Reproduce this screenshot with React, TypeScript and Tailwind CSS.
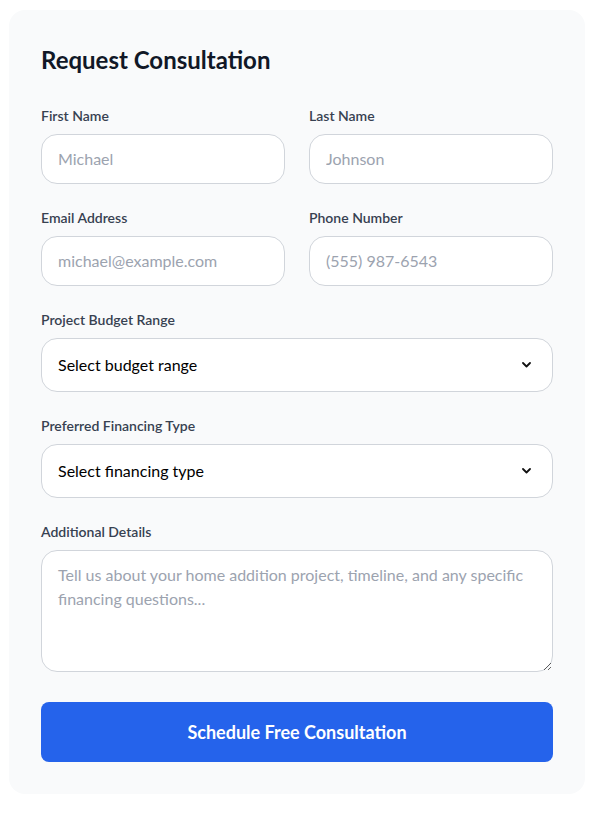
export default function App() {
  return (
    <main className="min-h-screen bg-white pl-[9px] pt-[10px] font-['Lato',sans-serif]">
      <div className="w-[576px] rounded-2xl bg-[#f9fafb] p-8">
        <h2 className="mb-7 text-2xl leading-9 font-bold text-[#111827]">Request Consultation</h2>
        <form className="space-y-6">
          <div className="grid grid-cols-2 gap-6">
            <div>
              <label className="mb-2 block text-sm font-semibold text-[#374151]">First Name</label>
              <input
                type="text"
                placeholder="Michael"
                className="w-full rounded-2xl border border-[#d1d5db] bg-white px-4 py-3 text-base placeholder:text-[#9ca3af]"
              />
            </div>
            <div>
              <label className="mb-2 block text-sm font-semibold text-[#374151]">Last Name</label>
              <input
                type="text"
                placeholder="Johnson"
                className="w-full rounded-2xl border border-[#d1d5db] bg-white px-4 py-3 text-base placeholder:text-[#9ca3af]"
              />
            </div>
          </div>

          <div className="grid grid-cols-2 gap-6">
            <div>
              <label className="mb-2 block text-sm font-semibold text-[#374151]">Email Address</label>
              <input
                type="email"
                placeholder="michael@example.com"
                className="w-full rounded-2xl border border-[#d1d5db] bg-white px-4 py-3 text-base placeholder:text-[#9ca3af]"
              />
            </div>
            <div>
              <label className="mb-2 block text-sm font-semibold text-[#374151]">Phone Number</label>
              <input
                type="tel"
                placeholder="(555) 987-6543"
                className="w-full rounded-2xl border border-[#d1d5db] bg-white px-4 py-3 text-base placeholder:text-[#9ca3af]"
              />
            </div>
          </div>

          <div>
            <label className="mb-2 block text-sm font-semibold text-[#374151]">Project Budget Range</label>
            <div className="relative">
              <select className="h-[54px] w-full appearance-none rounded-2xl border border-[#d1d5db] bg-white px-4 text-base text-black">
                <option>Select budget range</option>
              </select>
              <Chevron />
            </div>
          </div>

          <div>
            <label className="mb-2 block text-sm font-semibold text-[#374151]">Preferred Financing Type</label>
            <div className="relative">
              <select className="h-[54px] w-full appearance-none rounded-2xl border border-[#d1d5db] bg-white px-4 text-base text-black">
                <option>Select financing type</option>
              </select>
              <Chevron />
            </div>
          </div>

          <div>
            <label className="mb-2 block text-sm font-semibold text-[#374151]">Additional Details</label>
            <textarea
              rows={4}
              placeholder="Tell us about your home addition project, timeline, and any specific financing questions..."
              className="block w-full rounded-2xl border border-[#d1d5db] bg-white px-4 py-3 text-base placeholder:text-[#9ca3af]"
            ></textarea>
          </div>

          <div className="pt-[6px]">
            <button
              type="submit"
              className="w-full rounded-lg bg-[#2563eb] py-4 text-lg font-bold text-white"
            >
              Schedule Free Consultation
            </button>
          </div>
        </form>
      </div>
    </main>
  );
}

function Chevron() {
  return (
    <svg
      className="pointer-events-none absolute right-[22px] top-1/2 -translate-y-1/2"
      width="9"
      height="6"
      viewBox="0 0 9 6"
      fill="none"
    >
      <path d="M1 1l3.5 3.5L8 1" stroke="#111" strokeWidth="1.8" strokeLinecap="round" strokeLinejoin="round" />
    </svg>
  );
}
